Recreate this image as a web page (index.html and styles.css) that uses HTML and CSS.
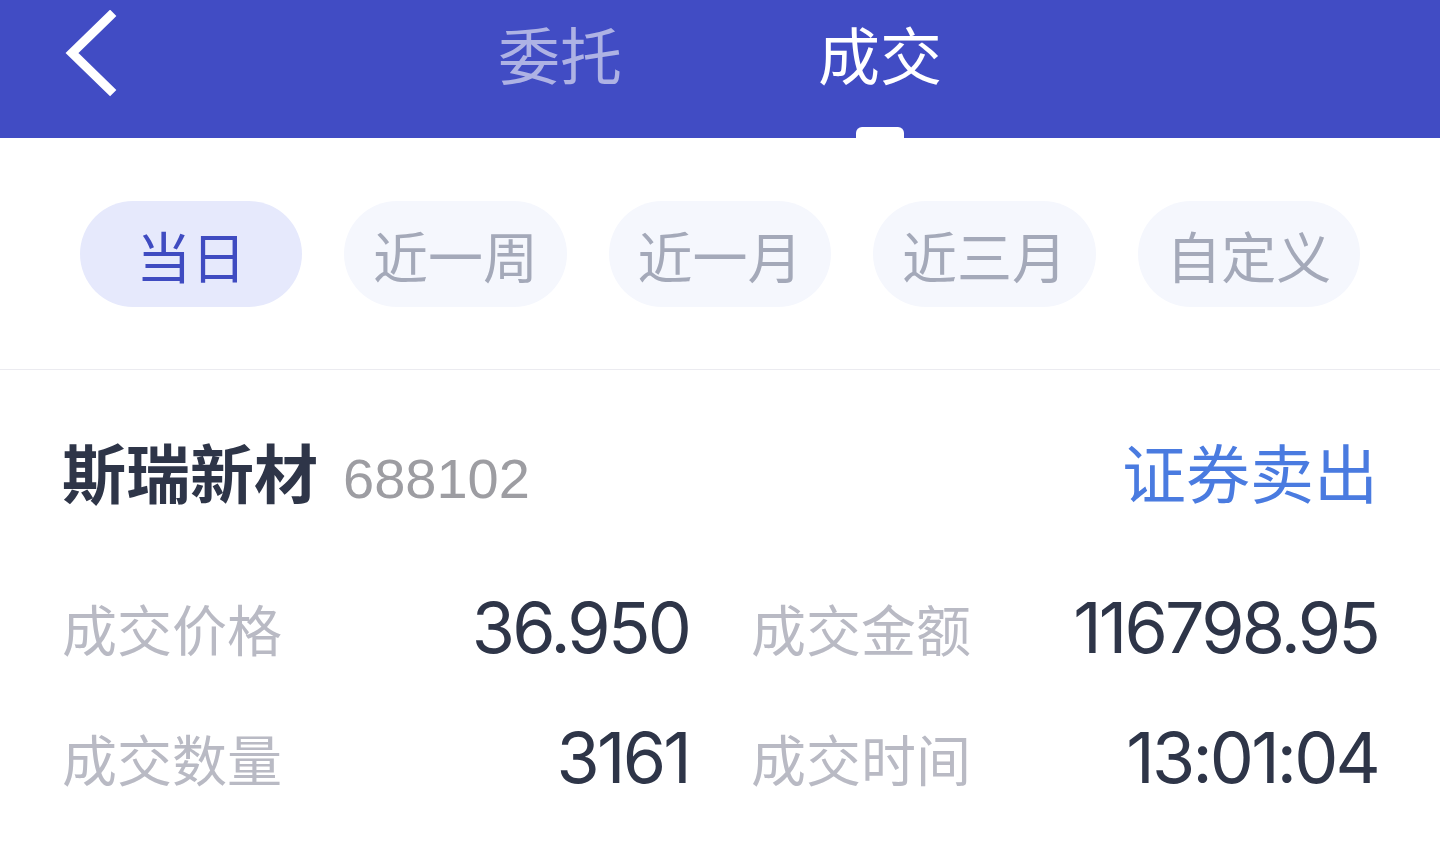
FILE: index.html
```html
<!DOCTYPE html>
<html lang="zh-CN">
    <head>
        <meta charset="utf-8">
        <meta name="viewport" content="width=device-width, initial-scale=1.0">
        <title>成交</title>
        <link rel="stylesheet" href="styles.css">
    </head>
    <body>
        <div id="header">
            <div class="back">
                <svg width="60" height="90" viewBox="0 0 60 90">
                    <polyline points="48,6 10,43 48,80" fill="none" stroke="#fff" stroke-width="9" stroke-linecap="square"/>
                </svg>
            </div>
            <div class="tab">
                <span class="tab-label">委托</span>
            </div>
            <div class="tab active">
                <span class="tab-label">成交</span>
                <span class="indicator"></span>
            </div>
        </div>
        <div id="filters">
            <button class="pill selected">当日</button>
            <button class="pill">近一周</button>
            <button class="pill">近一月</button>
            <button class="pill">近三月</button>
            <button class="pill">自定义</button>
        </div>
        <div id="deal">
            <div class="deal-head">
                <div class="stock">
                    <span class="stock-name">斯瑞新材</span>
                    <span class="stock-code">688102</span>
                </div>
                <span class="deal-type">证券卖出</span>
            </div>
            <div class="deal-grid">
                <div class="field"><span class="label">成交价格</span><span class="value">36.950</span></div>
                <div class="field"><span class="label">成交金额</span><span class="value">116798.95</span></div>
                <div class="field"><span class="label">成交数量</span><span class="value">3161</span></div>
                <div class="field"><span class="label">成交时间</span><span class="value">13:01:04</span></div>
            </div>
        </div>
    </body>
</html>
```

FILE: styles.css
```css
body {
    margin: 0;
    background: #fff;
    font-family: "Noto Sans CJK SC", "Noto Sans", sans-serif;
}

#header {
    display: grid;
    grid-template-columns: 400px 320px 320px 400px;
    height: 138px;
    background: #414cc4;
}

.back {
    padding: 10px 0 0 62px;
}

.back svg {
    display: block;
}

.tab {
    display: flex;
    flex-direction: column;
    align-items: center;
    justify-content: space-between;
}

.tab-label {
    font-size: 62px;
    line-height: 1;
    padding-top: 22px;
    color: #aeb2e4;
}

.tab.active .tab-label {
    color: #fff;
}

.indicator {
    width: 48px;
    height: 11px;
    border-radius: 6px 6px 0 0;
    background: #fff;
}

#filters {
    display: flex;
    gap: 42px;
    padding: 63px 80px 62px;
    border-bottom: 1px solid #ebebf0;
}

.pill {
    width: 223px;
    height: 106px;
    border: none;
    border-radius: 53px;
    background: #f5f7fd;
    color: #a4a9b9;
    font-family: inherit;
    font-size: 55px;
    padding: 0;
}

.pill.selected {
    background: #e6e9fc;
    color: #3f4bc1;
}

#deal {
    padding: 0 62px 0 62px;
}

.deal-head {
    display: flex;
    justify-content: space-between;
    align-items: center;
    height: 200px;
}

.stock {
    display: flex;
    align-items: baseline;
    gap: 25px;
}

.stock-name {
    font-size: 64px;
    font-weight: 700;
    color: #2e3548;
}

.stock-code {
    font-family: "Liberation Sans", sans-serif;
    font-size: 56px;
    color: #9d9da2;
}

.deal-type {
    font-size: 64px;
    color: #4a7be0;
}

.deal-grid {
    display: grid;
    grid-template-columns: 1fr 1fr;
    column-gap: 62px;
    row-gap: 48px;
    margin-top: 16px;
}

.field {
    display: flex;
    justify-content: space-between;
    align-items: center;
    height: 82px;
}

.label {
    font-size: 55px;
    color: #b9bac4;
}

.value {
    font-family: "Inter", sans-serif;
    font-size: 70px;
    letter-spacing: -2.8px;
    color: #2e3548;
}
```
